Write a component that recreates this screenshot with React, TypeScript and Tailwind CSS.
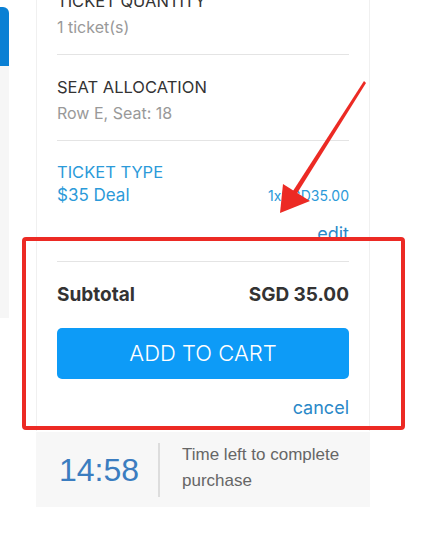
export default function App() {
  return (
    <div className="relative h-[535px] w-[421px] overflow-hidden bg-white font-['Inter',sans-serif]">
      <div className="flex">
        {/* left edge of page behind */}
        <div className="w-[9px] shrink-0">
          <div className="mt-[7px] h-[59px] rounded-tr-[6px] bg-[#0a80d4]" />
          <div className="h-[252px] bg-[#f6f6f6]" />
        </div>

        <div className="ml-[27px] w-[334px] shrink-0">
          {/* order card */}
          <div className="-mt-[11px] border-x border-[#f0f0f0] bg-white px-5">
            <Row label="TICKET QUANTITY" value="1 ticket(s)" />
            <div className="h-px bg-[#e4e4e4]" />
            <div className="pt-[20px]">
              <Row label="SEAT ALLOCATION" value="Row E, Seat: 18" />
            </div>
            <div className="h-px bg-[#e4e4e4]" />

            <div className="pt-[20px] text-[#2b9ad9]">
              <p className="text-[16.5px] leading-[23px]">TICKET TYPE</p>
              <div className="flex items-center justify-between">
                <span className="text-[17px] leading-[23px]">$35 Deal</span>
                <span className="text-[14px] leading-[23px]">1xSGD35.00</span>
              </div>
              <p className="mt-[15px] pb-[15px] text-right text-[18px] leading-[24px] text-[#2a88c8]">
                edit
              </p>
            </div>
            <div className="h-px bg-[#e4e4e4]" />

            <div className="flex items-center justify-between pt-[21px] text-[19px] font-bold leading-[24px] text-[#333]">
              <span>Subtotal</span>
              <span>SGD 35.00</span>
            </div>
            <button className="mt-[21px] flex h-[51px] w-full items-center justify-center rounded-[5px] bg-[#0d9bf7] text-[22px] font-light text-white">
              ADD TO CART
            </button>
            <p className="mt-[17px] pb-[11px] text-right text-[18px] leading-[24px] text-[#2a88c8]">
              cancel
            </p>
          </div>

          {/* countdown */}
          <div className="mt-px flex h-[75px] items-center bg-[#f7f7f7] font-['Liberation_Sans',sans-serif]">
            <span className="w-[122px] pl-[23px] text-[32px] text-[#3b7dc0]">14:58</span>
            <div className="h-[54px] w-[2px] bg-[#dddddd]" />
            <p className="-mt-[3px] pl-[22px] text-[17px] leading-[26px] text-[#666]">
              Time left to complete
              <br />
              purchase
            </p>
          </div>
        </div>
      </div>

      {/* annotation overlay */}
      <div className="pointer-events-none absolute left-[22px] top-[237px] h-[193px] w-[383px] rounded-[4px] border-[4px] border-[#ec2a24]" />
      <svg className="pointer-events-none absolute inset-0" width="421" height="535" viewBox="0 0 421 535">
        <polygon points="364,81 366,83 296,195 292,192.5" fill="#ec2a24" />
        <polygon points="280,213 283,184 310,201" fill="#ec2a24" />
      </svg>
    </div>
  );
}

function Row({ label, value }: { label: string; value: string }) {
  return (
    <div className="pb-[15px]">
      <p className="text-[16.5px] leading-[24px] text-[#333]">{label}</p>
      <p className="mt-[2px] text-[16px] leading-[24px] text-[#999]">{value}</p>
    </div>
  );
}
